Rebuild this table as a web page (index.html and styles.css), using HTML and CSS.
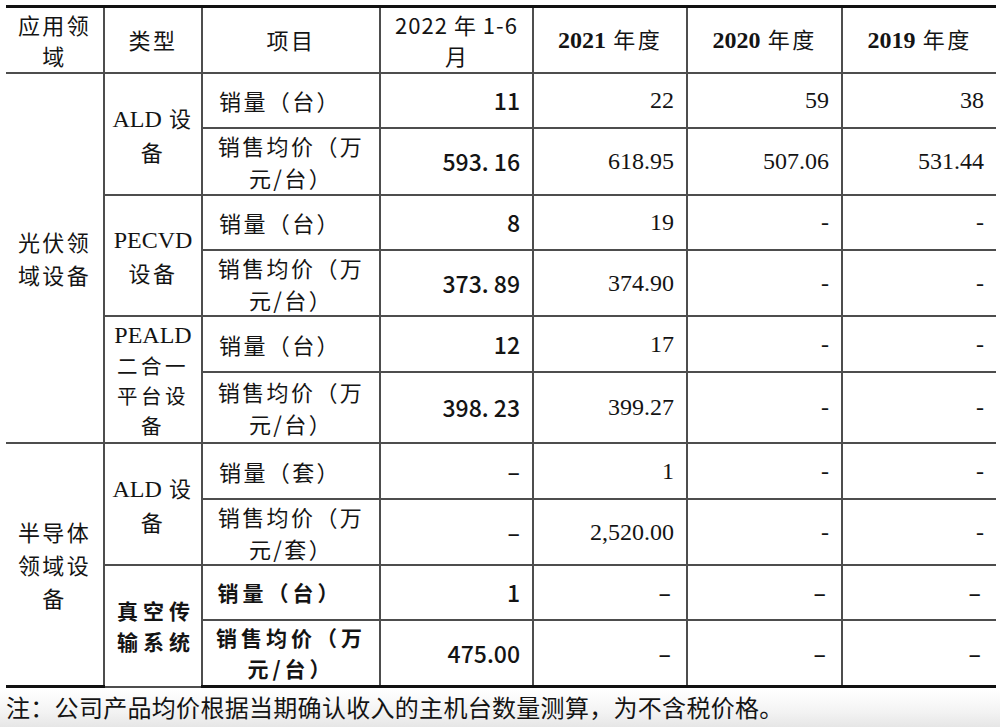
FILE: index.html
```html
<!DOCTYPE html>
<html lang="zh-CN">
<head>
<meta charset="utf-8">
<title>销量与销售均价</title>
<link rel="stylesheet" href="styles.css">
</head>
<body>
<div class="page">
<table class="tbl">
  <colgroup>
    <col class="c1"><col class="c2"><col class="c3"><col class="c4"><col class="c5"><col class="c6"><col class="c7">
  </colgroup>
  <thead>
    <tr class="hrow">
      <th class="first cjk">应用领<br>域</th>
      <th class="cjk">类型</th>
      <th class="cjk">项目</th>
      <th class="cjk period">2022 年 1-6<br>月</th>
      <th class="cjk"><b class="tn">2021</b> 年度</th>
      <th class="cjk"><b class="tn">2020</b> 年度</th>
      <th class="last cjk"><b class="tn">2019</b> 年度</th>
    </tr>
  </thead>
  <tbody>
    <tr class="r55">
      <td class="first area cjk" rowspan="6">光伏领<br>域设备</td>
      <td class="type cjk" rowspan="2"><span class="tn">ALD</span> 设<br>备</td>
      <td class="item cjk shift">销量（台）</td>
      <td class="num sans">11</td>
      <td class="num tn">22</td>
      <td class="num tn">59</td>
      <td class="num tn last">38</td>
    </tr>
    <tr class="r67">
      <td class="item cjk">销售均价（万<br>元/台）</td>
      <td class="num sans">593. 16</td>
      <td class="num tn">618.95</td>
      <td class="num tn">507.06</td>
      <td class="num tn last">531.44</td>
    </tr>
    <tr class="r55">
      <td class="type cjk" rowspan="2"><span class="tn">PECVD</span><br>设备</td>
      <td class="item cjk shift">销量（台）</td>
      <td class="num sans">8</td>
      <td class="num tn">19</td>
      <td class="num tn">-</td>
      <td class="num tn last">-</td>
    </tr>
    <tr class="r66">
      <td class="item cjk">销售均价（万<br>元/台）</td>
      <td class="num sans">373. 89</td>
      <td class="num tn">374.90</td>
      <td class="num tn">-</td>
      <td class="num tn last">-</td>
    </tr>
    <tr class="r56">
      <td class="type cjk tall" rowspan="2"><span class="tn">PEALD</span><br>二合一<br>平台设<br>备</td>
      <td class="item cjk shift">销量（台）</td>
      <td class="num sans">12</td>
      <td class="num tn">17</td>
      <td class="num tn">-</td>
      <td class="num tn last">-</td>
    </tr>
    <tr class="r71">
      <td class="item cjk">销售均价（万<br>元/台）</td>
      <td class="num sans">398. 23</td>
      <td class="num tn">399.27</td>
      <td class="num tn">-</td>
      <td class="num tn last">-</td>
    </tr>
    <tr class="r56">
      <td class="first area cjk" rowspan="4">半导体<br>领域设<br>备</td>
      <td class="type cjk" rowspan="2"><span class="tn">ALD</span> 设<br>备</td>
      <td class="item cjk shift">销量（套）</td>
      <td class="num sans">–</td>
      <td class="num tn">1</td>
      <td class="num tn">-</td>
      <td class="num tn last">-</td>
    </tr>
    <tr class="r66">
      <td class="item cjk">销售均价（万<br>元/套）</td>
      <td class="num sans">–</td>
      <td class="num tn">2,520.00</td>
      <td class="num tn">-</td>
      <td class="num tn last">-</td>
    </tr>
    <tr class="r55">
      <td class="type strong" rowspan="2">真空传<br>输系统</td>
      <td class="item strong shift">销量（台）</td>
      <td class="num sans">1</td>
      <td class="num sans bolddash">–</td>
      <td class="num sans bolddash">–</td>
      <td class="num sans bolddash last">–</td>
    </tr>
    <tr class="r67 lastrow">
      <td class="item strong">销售均价（万<br>元/台）</td>
      <td class="num sans">475.00</td>
      <td class="num sans bolddash">–</td>
      <td class="num sans bolddash">–</td>
      <td class="num sans bolddash last">–</td>
    </tr>
  </tbody>
</table>
<p class="note">注：公司产品均价根据当期确认收入的主机台数量测算，为不含税价格。</p>
</div>
</body>
</html>
```

FILE: styles.css
```css
html, body {
  margin: 0;
  padding: 0;
  background: #ffffff;
}

body {
  font-family: "Noto Sans CJK SC", "Noto Sans", sans-serif;
  color: #141414;
}

.page {
  width: 1000px;
  height: 727px;
  overflow: hidden;
  padding-top: 5px;
  box-sizing: border-box;
  background: linear-gradient(to bottom, #ffffff 0, #ffffff 690px, #f3f3f3 712px, #e6e6e6 727px);
}

.tbl {
  margin-left: 6px;
  width: 990px;
  table-layout: fixed;
  border-collapse: collapse;
  background: #ffffff;
}

.c1 { width: 98px; }
.c2 { width: 98px; }
.c3 { width: 178px; }
.c4 { width: 153px; }
.c5 { width: 154px; }
.c6 { width: 155px; }
.c7 { width: 154px; }

.tbl th,
.tbl td {
  border: 2px solid #4d4d4d;
  padding: 0;
  font-size: 24px;
  line-height: 32px;
  text-align: center;
  vertical-align: middle;
  font-weight: 400;
}

.tbl th {
  border-top: 3px solid #111111;
}

.tbl .cjk {
  font-size: 22px;
  letter-spacing: 2.4px;
  line-height: 32px;
}

.tbl th.cjk { line-height: 31px; }

.tbl th.period { letter-spacing: 1px; }

.tbl .area { line-height: 33px; }

.tbl .first { border-left: none; }
.tbl .last { border-right: none; }

.hrow { height: 66px; }
.r55 { height: 55px; }
.r56 { height: 56px; }
.r66 { height: 66px; }
.r67 { height: 67px; }
.r71 { height: 71px; }

.tbl .lastrow td { border-bottom: 3px solid #111111; }
.tbl td.first[rowspan="4"] { border-bottom: 3px solid #111111; }

.tn {
  font-family: "Liberation Serif", "Noto Sans CJK SC", serif;
  letter-spacing: 0;
}

.tbl .cjk .tn { font-size: 24px; letter-spacing: 0; }

b.tn { font-weight: 700; }

.sans {
  font-family: "Noto Sans CJK SC", "Noto Sans", sans-serif;
}

.tbl td.num {
  text-align: right;
  padding-right: 12px;
}

.tbl td.num.sans {
  font-size: 23px;
  font-weight: 500;
}

.tbl td.bolddash {
  font-weight: 700;
  padding-right: 15px;
}

.tbl td.item.shift { padding-right: 22px; }

.tbl td.type { padding: 0 2px; }

.tbl td.tall {
  font-size: 20.5px;
  letter-spacing: 3.5px;
  line-height: 30px;
}

.tbl td.strong {
  font-weight: 700;
  font-size: 21px;
  letter-spacing: 4px;
  line-height: 31px;
}

.tbl td.type.strong { letter-spacing: 5px; padding-left: 8px; }

.note {
  margin: 0;
  padding: 3px 0 0 6px;
  font-size: 24px;
  line-height: 32px;
  letter-spacing: 0.3px;
  color: #141414;
}
```
